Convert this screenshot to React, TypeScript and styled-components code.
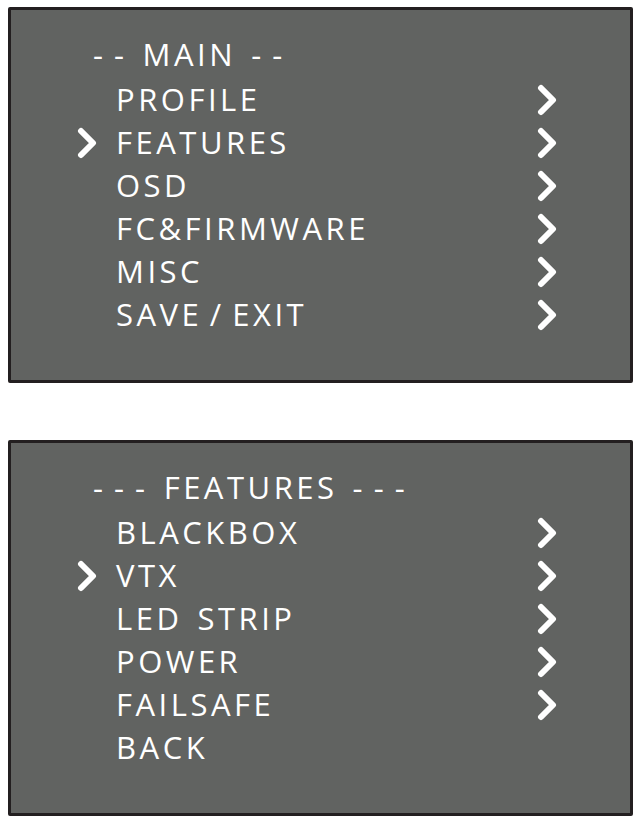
import React from "react";
import styled, { createGlobalStyle } from "styled-components";

type Item = { label: string; selected?: boolean; sub?: boolean };

const mainMenu: Item[] = [
  { label: "PROFILE", sub: true },
  { label: "FEATURES", selected: true, sub: true },
  { label: "OSD", sub: true },
  { label: "FC&FIRMWARE", sub: true },
  { label: "MISC", sub: true },
  { label: "SAVE / EXIT", sub: true },
];

const featuresMenu: Item[] = [
  { label: "BLACKBOX", sub: true },
  { label: "VTX", selected: true, sub: true },
  { label: "LED  STRIP", sub: true },
  { label: "POWER", sub: true },
  { label: "FAILSAFE", sub: true },
  { label: "BACK" },
];

const Chevron = () => (
  <svg width="20" height="32" viewBox="0 0 20 32">
    <polyline
      points="4,4 16,16 4,28"
      fill="none"
      stroke="#fff"
      strokeWidth="6"
      strokeLinecap="round"
      strokeLinejoin="round"
    />
  </svg>
);

const Menu = ({ title, items }: { title: string; items: Item[] }) => (
  <Panel>
    <Header>{title}</Header>
    {items.map((item) => (
      <Row key={item.label}>
        <Marker>{item.selected && <Chevron />}</Marker>
        <Label>{item.label}</Label>
        <Marker>{item.sub && <Chevron />}</Marker>
      </Row>
    ))}
  </Panel>
);

const App = () => {
  return (
    <>
      <GlobalStyle />
      <Page>
        <Menu title="- -  MAIN  - -" items={mainMenu} />
        <Menu title="- - -  FEATURES  - - -" items={featuresMenu} />
      </Page>
    </>
  );
};

export default App;

const GlobalStyle = createGlobalStyle`
  body {
    margin: 0;
    background: #ffffff;
    font-family: "Open Sans", "Liberation Sans", sans-serif;
  }
`;

const Page = styled.div`
  padding: 7px 10px 0 8px;
  display: flex;
  flex-direction: column;
  gap: 57px;
`;

const Panel = styled.div`
  height: 376px;
  box-sizing: border-box;
  border: 3px solid #231f20;
  border-radius: 2px;
  background: #616361;
  padding: 23px 73px 0 66px;
  display: flex;
  flex-direction: column;
`;

const Header = styled.div`
  padding-left: 16px;
  margin-bottom: 2px;
  color: #ffffff;
  font-size: 31px;
  line-height: 43px;
  letter-spacing: 3.5px;
  word-spacing: -4px;
  white-space: pre;
`;

const Row = styled.div`
  display: grid;
  grid-template-columns: 39px 1fr 20px;
  align-items: center;
  height: 43px;
`;

const Marker = styled.div`
  display: flex;
  align-items: center;
  height: 32px;
`;

const Label = styled.div`
  color: #ffffff;
  font-size: 31px;
  line-height: 43px;
  letter-spacing: 3.5px;
  word-spacing: -4px;
  white-space: pre;
`;
